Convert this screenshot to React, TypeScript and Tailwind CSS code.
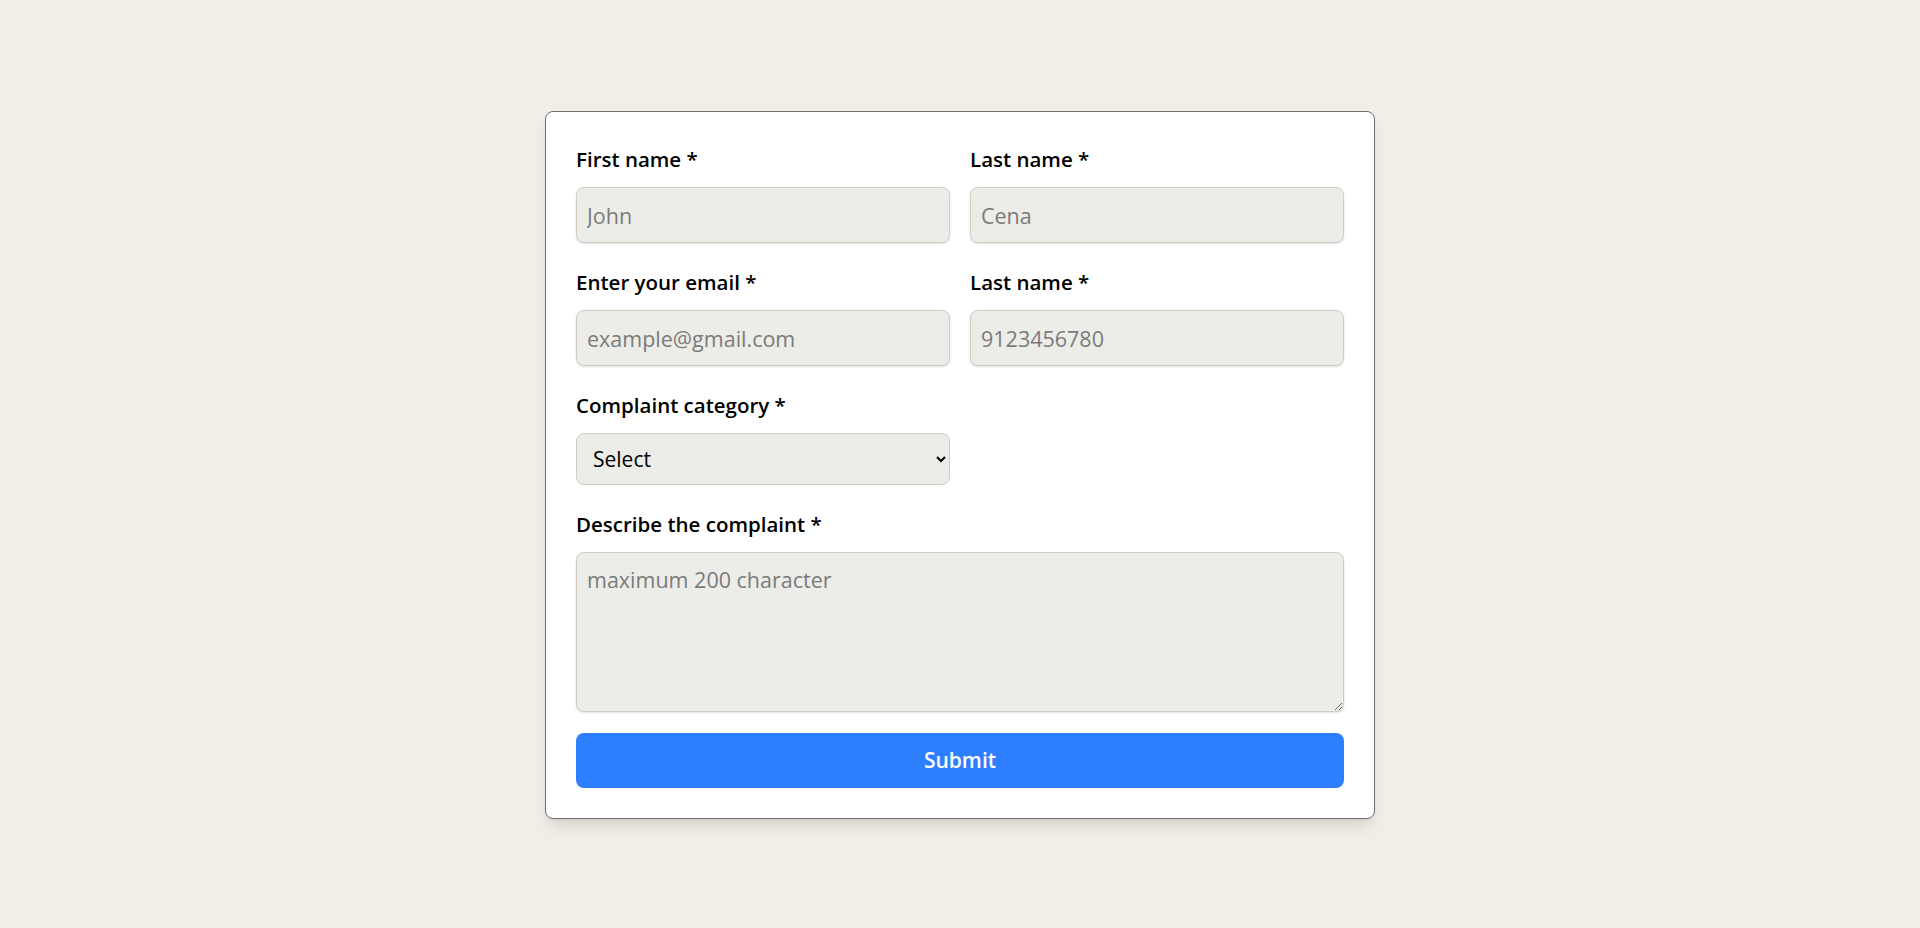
import { useState } from "react";

const inputCls =
  "w-full h-[56px] rounded-[8px] border border-[#d6cbc2] bg-[#ecece8] px-[10px] text-[21.5px] text-black placeholder:text-[#7b7b7b] shadow-sm outline-none";

function Field({ label, children }: { label: string; children: React.ReactNode }) {
  return (
    <div className="flex flex-col">
      <label className="block h-[30px] pt-[4px] leading-[26px] text-[20.5px] font-semibold text-black">{label}</label>
      <div className="mt-[15px]">{children}</div>
    </div>
  );
}

export default function App() {
  const [category, setCategory] = useState("");

  return (
    <div className="min-h-screen bg-[#f1eee7] flex justify-center pt-[111px] font-['Open_Sans',sans-serif]">
      <form
        className="w-[830px] self-start rounded-[8px] border border-[#707070] bg-white px-[30px] pt-[30px] pb-[30px] shadow-lg"
        onSubmit={(e) => e.preventDefault()}
      >
        <div className="grid grid-cols-2 gap-x-[20px] gap-y-[22px]">
          <Field label="First name *">
            <input className={inputCls} placeholder="John" />
          </Field>
          <Field label="Last name *">
            <input className={inputCls} placeholder="Cena" />
          </Field>
          <Field label="Enter your email *">
            <input className={inputCls} placeholder="example@gmail.com" />
          </Field>
          <Field label="Last name *">
            <input className={inputCls} placeholder="9123456780" />
          </Field>
          <Field label="Complaint category *">
            <select
              value={category}
              onChange={(e) => setCategory(e.target.value)}
              className="w-full h-[52px] rounded-[8px] border border-[#d6cbc2] bg-[#ecece8] px-[12px] text-[21px] text-black outline-none"
            >
              <option value="">Select</option>
              <option value="service">Service</option>
              <option value="billing">Billing</option>
              <option value="other">Other</option>
            </select>
          </Field>
          <div />
          <div className="col-span-2">
            <Field label="Describe the complaint *">
              <textarea
                className="block w-full h-[160px] rounded-[8px] border border-[#d6cbc2] bg-[#ecece8] px-[10px] py-[11px] text-[21.5px] text-black placeholder:text-[#7b7b7b] shadow-sm outline-none"
                placeholder="maximum 200 character"
              />
            </Field>
          </div>
        </div>
        <button
          type="submit"
          className="mt-[21px] w-full h-[55px] rounded-[8px] bg-[#2d7fff] text-[21px] font-semibold text-white"
        >
          Submit
        </button>
      </form>
    </div>
  );
}
